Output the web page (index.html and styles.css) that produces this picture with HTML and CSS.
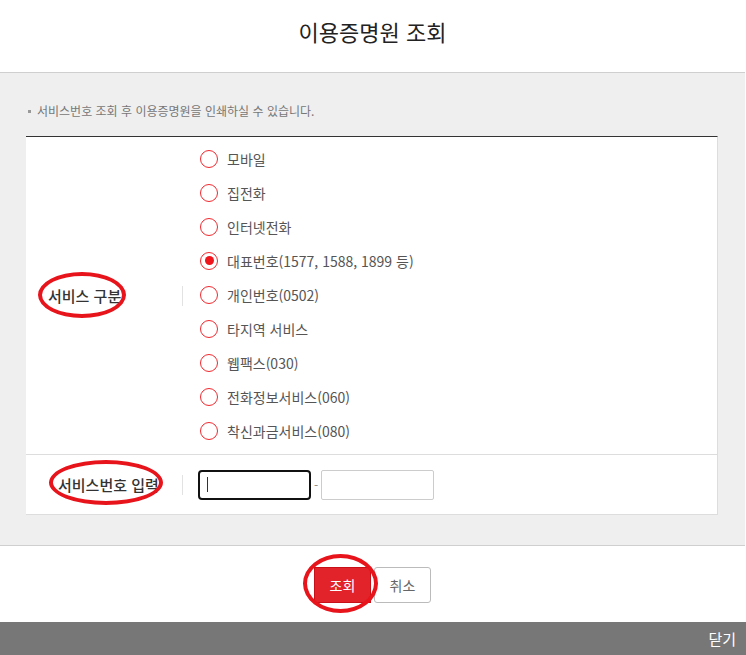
FILE: index.html
```html
<!DOCTYPE html>
<html lang="ko">
<head>
<meta charset="utf-8">
<title>이용증명원 조회</title>
<link rel="stylesheet" href="styles.css">
</head>
<body>
<div class="modal">
  <header class="modal-head">이용증명원 조회</header>
  <section class="modal-body">
    <p class="note"><span class="bullet"></span>서비스번호 조회 후 이용증명원을 인쇄하실 수 있습니다.</p>
    <div class="form-table">
      <div class="row row-type">
        <div class="label label-type">서비스 구분</div>
        <div class="sep"></div>
        <ul class="radios">
          <li class="radio"><span class="circle"></span>모바일</li>
          <li class="radio"><span class="circle"></span>집전화</li>
          <li class="radio"><span class="circle"></span>인터넷전화</li>
          <li class="radio checked"><span class="circle"></span>대표번호(1577, 1588, 1899 등)</li>
          <li class="radio"><span class="circle"></span>개인번호(0502)</li>
          <li class="radio"><span class="circle"></span>타지역 서비스</li>
          <li class="radio"><span class="circle"></span>웹팩스(030)</li>
          <li class="radio"><span class="circle"></span>전화정보서비스(060)</li>
          <li class="radio"><span class="circle"></span>착신과금서비스(080)</li>
        </ul>
      </div>
      <div class="row row-num">
        <div class="label label-num">서비스번호 입력</div>
        <div class="sep"></div>
        <div class="inputs">
          <div class="input focused"><span class="caret"></span></div>
          <span class="dash">-</span>
          <div class="input"></div>
        </div>
      </div>
    </div>
  </section>
  <footer class="modal-foot">
    <button class="btn btn-primary">조회</button>
    <button class="btn btn-cancel">취소</button>
  </footer>
  <div class="close-bar"><span>닫기</span></div>
</div>
<div class="mark mark-1"></div>
<div class="mark mark-2"></div>
<div class="mark mark-3"></div>
</body>
</html>
```
FILE: styles.css
```css
* { box-sizing: border-box; }
html, body { margin: 0; padding: 0; }
body {
  width: 746px;
  height: 655px;
  background: #fff;
  font-family: "Noto Sans CJK KR", "Noto Sans", sans-serif;
  position: relative;
  overflow: hidden;
}
.modal {
  width: 745px;
  display: flex;
  flex-direction: column;
}
.modal-head {
  height: 73px;
  border-bottom: 1px solid #cfcfcf;
  text-align: center;
  font-size: 22px;
  line-height: 62px;
  color: #222;
  font-weight: 400;
}
.modal-body {
  background: #efefef;
  padding: 28px 27px 30px 26px;
  border-bottom: 1px solid #cfcfcf;
}
.note {
  margin: 0 0 15px 2px;
  font-size: 12px;
  color: #777;
  line-height: 20px;
  display: flex;
  align-items: center;
}
.bullet {
  width: 3px;
  height: 3px;
  background: #999;
  margin-right: 6px;
}
.form-table {
  background: #fff;
  border-top: 1px solid #333;
  border-right: 1px solid #ddd;
  border-bottom: 1px solid #ddd;
}
.row {
  display: flex;
  align-items: center;
}
.row-type {
  height: 318px;
  border-bottom: 1px solid #ddd;
}
.row-num { height: 59px; }
.label {
  width: 156px;
  font-size: 15px;
  font-weight: 500;
  color: #333;
}
.label-type { padding-left: 22px; }
.label-num { padding-left: 32px; }
.sep {
  width: 1px;
  height: 20px;
  background: #e2e2e2;
}
.radios {
  list-style: none;
  margin: 0;
  padding: 5px 0 7px 17px;
}
.radio {
  height: 34px;
  display: flex;
  align-items: center;
  font-size: 14px;
  color: #555;
}
.circle {
  width: 18px;
  height: 18px;
  border: 1.5px solid #f0282e;
  border-radius: 50%;
  margin-right: 9px;
  display: flex;
  align-items: center;
  justify-content: center;
}
.checked .circle::after {
  content: "";
  width: 9px;
  height: 9px;
  border-radius: 50%;
  background: #f0141c;
}
.inputs {
  display: flex;
  align-items: center;
  padding-left: 15px;
}
.input {
  width: 113px;
  height: 30px;
  border: 1px solid #ccc;
  border-radius: 2px;
  background: #fff;
  display: flex;
  align-items: center;
}
.input.focused {
  border: 2px solid #111;
  border-radius: 4px;
}
.caret {
  width: 1px;
  height: 15px;
  background: #333;
  margin-left: 7px;
}
.dash {
  width: 10px;
  text-align: center;
  font-size: 12px;
  color: #888;
}
.modal-foot {
  height: 76px;
  display: flex;
  justify-content: center;
  align-items: center;
  gap: 3px;
  padding-top: 1px;
}
.btn {
  width: 57px;
  height: 36px;
  font-family: inherit;
  font-size: 14px;
  border-radius: 3px;
  cursor: pointer;
}
.btn-primary {
  background: #e2232a;
  border: 1px solid #c81018;
  color: #fff;
  border-radius: 0;
}
.btn-cancel {
  background: #fff;
  border: 1px solid #bbb;
  color: #666;
}
.close-bar {
  height: 33px;
  background: #777;
  display: flex;
  justify-content: flex-end;
  align-items: center;
  padding-right: 10px;
  font-size: 15px;
  color: #fff;
  width: 746px;
}
.mark {
  position: absolute;
  border: 4px solid #e8141c;
  border-radius: 50%;
}
.mark-1 { left: 38px; top: 272px; width: 88px; height: 46px; }
.mark-2 { left: 49px; top: 460px; width: 114px; height: 45px; }
.mark-3 { left: 303px; top: 554px; width: 75px; height: 59px; }
```
